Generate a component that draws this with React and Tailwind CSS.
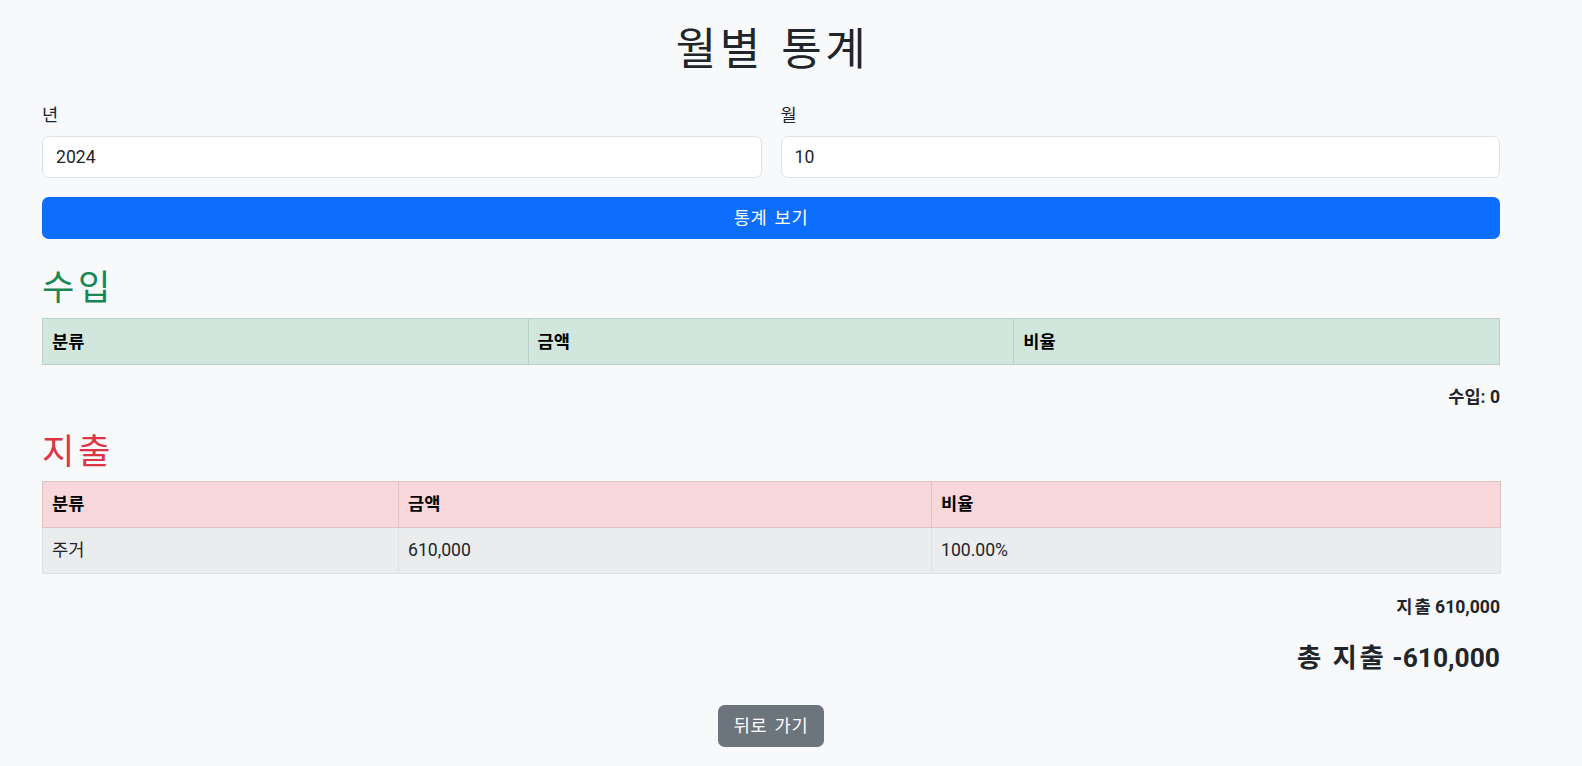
import React from 'react'

const font = { fontFamily: 'Roboto, "Noto Sans CJK KR", sans-serif' }

function StatTable({ tone, widths, rows }) {
  const head =
    tone === 'green'
      ? 'bg-[#d1e7dd] border-[#bcd0c7]'
      : 'bg-[#f8d7da] border-[#dfc2c4]'
  return (
    <table className="w-full table-fixed border-collapse text-[17.6px] leading-[26.4px]">
      <colgroup>
        {widths.map((w, i) => (
          <col key={i} style={{ width: w }} />
        ))}
      </colgroup>
      <thead>
        <tr>
          {['분류', '금액', '비율'].map((h) => (
            <th
              key={h}
              className={`border ${head} h-[46px] px-[9px] text-left font-bold text-black`}
            >
              {h}
            </th>
          ))}
        </tr>
      </thead>
      <tbody>
        {rows.map((r, i) => (
          <tr key={i} className="bg-[#ebeced]">
            {r.map((c, j) => (
              <td key={j} className="border border-[#dee2e6] h-[46px] px-[9px] text-[#212529]">
                {c}
              </td>
            ))}
          </tr>
        ))}
      </tbody>
    </table>
  )
}

export default function App() {
  return (
    <div className="min-h-[766px] bg-[#f8f9fa] text-[#212529]" style={font}>
      <div className="ml-[42px] w-[1458px] pt-[24px] pb-[20px]">
        <h1 className="text-center text-[44px] leading-[53px] font-normal tracking-[0.08em] [word-spacing:3px] pl-[3px]">
          월별 통계
        </h1>

        <div className="mt-[25px] flex gap-[19px]">
          <div className="flex-1">
            <label className="block text-[17.6px] leading-[26.4px] mb-[8px]">년</label>
            <input
              defaultValue="2024"
              className="block w-full h-[42px] rounded-[6.6px] border border-[#dee2e6] bg-white px-[13px] text-[17.6px] text-[#212529] outline-none"
            />
          </div>
          <div className="flex-1">
            <label className="block text-[17.6px] leading-[26.4px] mb-[8px]">월</label>
            <input
              defaultValue="10"
              className="block w-full h-[42px] rounded-[6.6px] border border-[#dee2e6] bg-white px-[13px] text-[17.6px] text-[#212529] outline-none"
            />
          </div>
        </div>

        <button className="mt-[19px] block w-full h-[42px] rounded-[6.6px] bg-[#0d6efd] text-white text-[17.6px] tracking-[0.04em] [word-spacing:2px]">
          통계 보기
        </button>

        <h2 className="mt-[28px] mb-[9px] text-[35.2px] leading-[42px] text-[#198754] font-normal tracking-[0.1em]">
          수입
        </h2>
        <StatTable tone="green" widths={['33.33%', '33.33%', '33.34%']} rows={[]} />
        <p className="mt-[19px] text-right font-bold text-[17.6px] leading-[26.4px]">수입: 0</p>

        <h2 className="mt-[20px] mb-[8px] text-[35.2px] leading-[42px] text-[#dc3545] font-normal tracking-[0.1em]">
          지출
        </h2>
        <StatTable
          tone="red"
          widths={['356px', '533px', '569px']}
          rows={[['주거', '610,000', '100.00%']]}
        />
        <p className="mt-[20px] text-right font-bold text-[17.6px] leading-[26.4px]">
          <span className="tracking-[0.12em]">지</span>출 610,000
        </p>
        <h4 className="mt-[23px] text-right font-bold text-[26.4px] leading-[31.7px] [word-spacing:2px]">
          <span className="tracking-[0.1em]">총</span> <span className="tracking-[0.1em]">지</span>출 -610,000
        </h4>

        <div className="mt-[30px] flex justify-center">
          <button className="h-[42px] w-[106px] rounded-[6.6px] bg-[#6c757d] text-white text-[17.6px] tracking-[0.04em] [word-spacing:2px]">
            뒤로 가기
          </button>
        </div>
      </div>
    </div>
  )
}
